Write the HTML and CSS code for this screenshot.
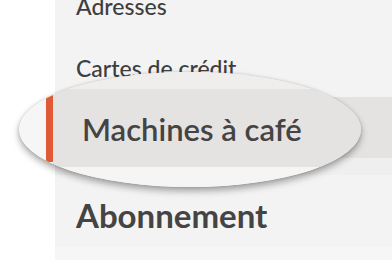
FILE: index.html
```html
<!DOCTYPE html>
<html lang="fr">
<head>
<meta charset="utf-8">
<title>Menu</title>
<link rel="stylesheet" href="styles.css">
</head>
<body>
<div class="stage">
  <nav class="panel">
    <div class="item item-first">Adresses</div>
    <div class="item item-second">Cartes de crédit</div>
    <div class="item-active"></div>
    <div class="item-gap"></div>
    <div class="item item-heading">Abonnement</div>
    <div class="item-foot"></div>
  </nav>
  <div class="lens">
    <div class="lens-top"></div>
    <div class="lens-row">
      <div class="lens-gutter"><span class="lens-bar"></span></div>
      <div class="lens-label">Machines à café</div>
    </div>
    <div class="lens-bottom"></div>
  </div>
</div>
</body>
</html>
```

FILE: styles.css
```css
html, body {
  margin: 0;
  padding: 0;
  background: #ffffff;
}
body {
  width: 392px;
  height: 260px;
  overflow: hidden;
  font-family: "Lato", "Open Sans", sans-serif;
  color: #3e3e3e;
}
.stage {
  position: relative;
  width: 392px;
  height: 260px;
}
.panel {
  margin-left: 55px;
  height: 260px;
  background: #f3f3f3;
  display: flex;
  flex-direction: column;
}
.item {
  padding-left: 21px;
  white-space: nowrap;
}
.item-first {
  margin-top: -12px;
  height: 48px;
  font-size: 23px;
  font-weight: 500;
  line-height: 36px;
  box-sizing: border-box;
}
.item-second {
  height: 61px;
  font-size: 23px;
  font-weight: 500;
  line-height: 30px;
  padding-top: 17px;
  box-sizing: border-box;
}
.item-active {
  height: 61px;
  background: #e4e3e1;
}
.item-gap {
  height: 17px;
  background: #efefef;
}
.item-heading {
  height: 72px;
  font-size: 33px;
  font-weight: 700;
  line-height: 40px;
  padding-top: 20px;
  box-sizing: border-box;
  color: #444444;
}
.item-foot {
  flex: 1;
  background: #f6f6f6;
}
.lens {
  position: absolute;
  left: 19px;
  top: 72px;
  width: 342px;
  height: 115px;
  border-radius: 50%;
  overflow: hidden;
  display: flex;
  flex-direction: column;
  background: #f4f4f4;
  box-shadow: 0 4px 7px rgba(0, 0, 0, 0.34), 0 0 3px rgba(0, 0, 0, 0.16);
}
.lens-top {
  height: 17px;
  background: #efeeec;
}
.lens-row {
  height: 78px;
  display: flex;
}
.lens-gutter {
  width: 34px;
  background: #f6f6f6;
  display: flex;
  justify-content: flex-end;
}
.lens-bar {
  width: 7px;
  margin: 6px 0 5px;
  background: #e05a35;
}
.lens-label {
  flex: 1;
  background: #e4e3e1;
  padding-left: 29px;
  font-size: 31px;
  font-weight: 600;
  line-height: 80px;
  color: #444444;
  white-space: nowrap;
}
.lens-bottom {
  flex: 1;
  background: #f5f5f5;
}
```
